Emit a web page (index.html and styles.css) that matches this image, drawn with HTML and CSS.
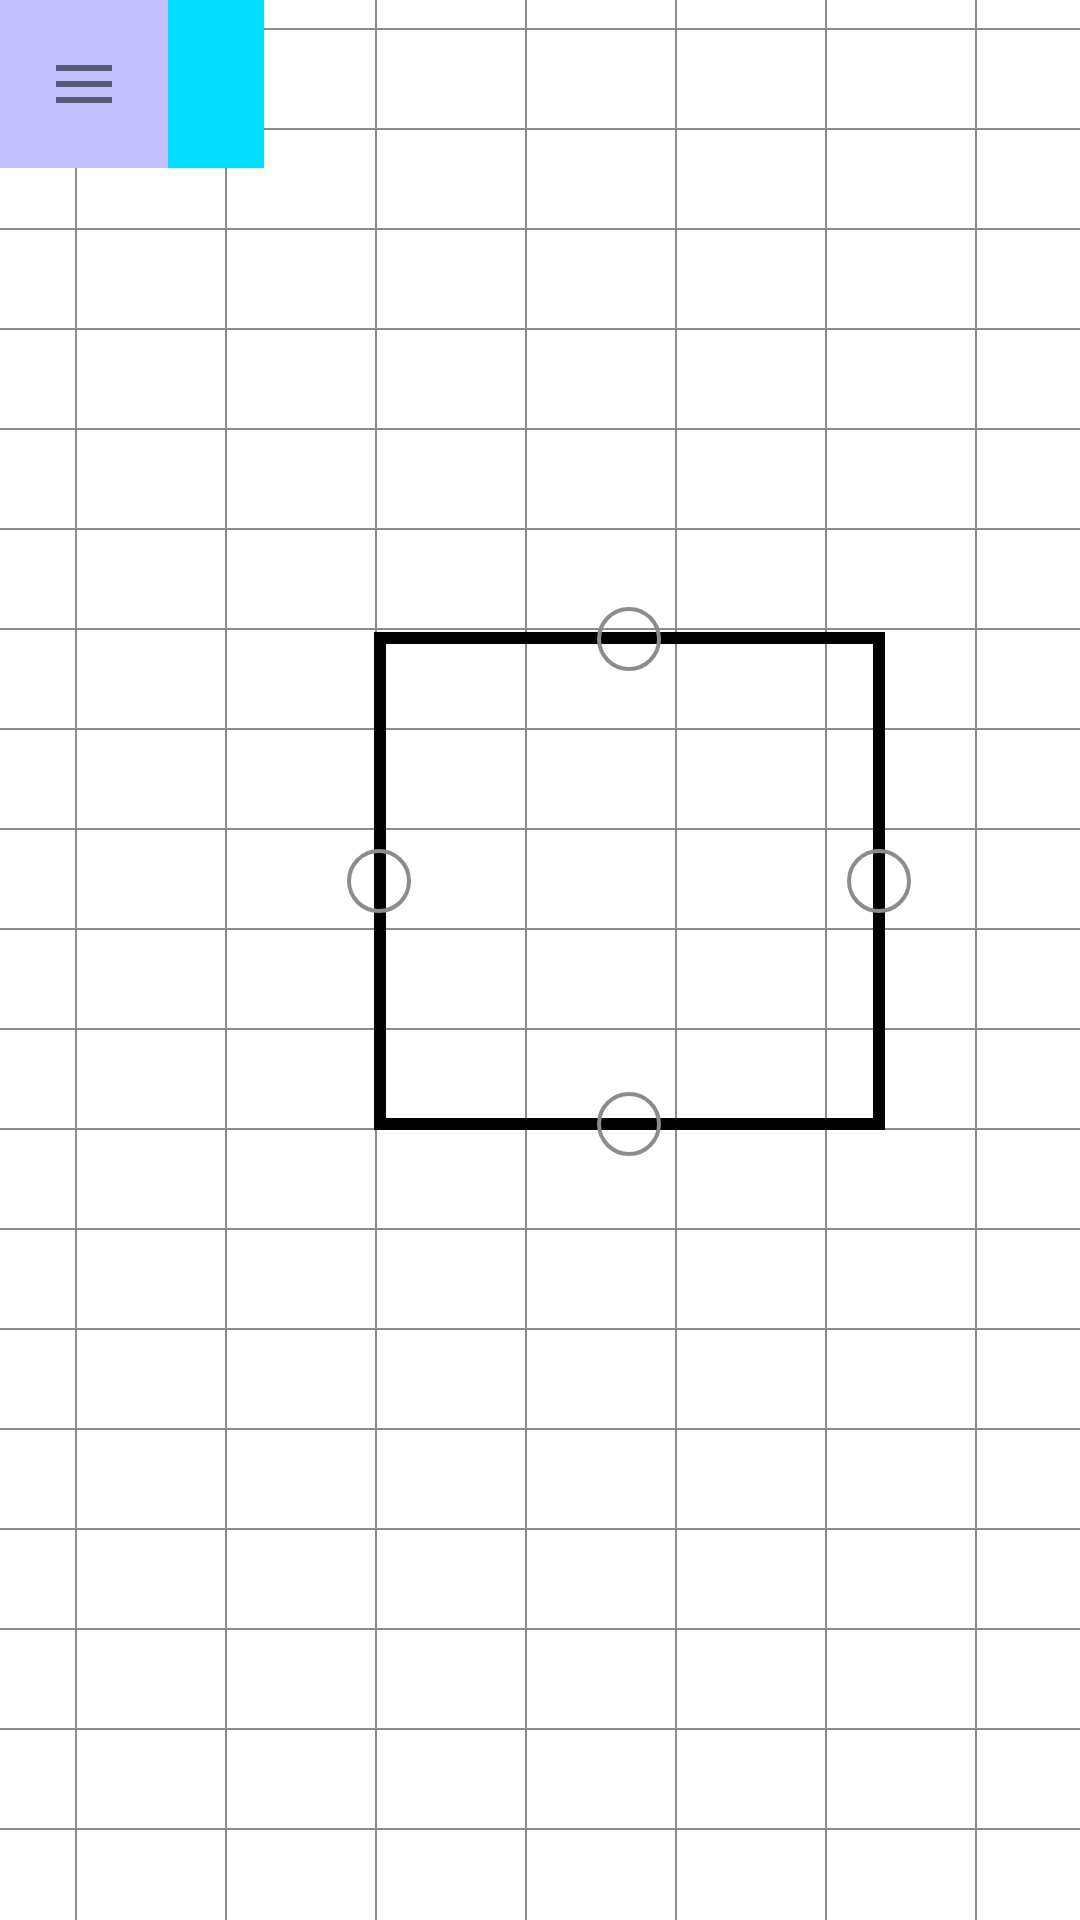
FILE: index.html
```html
<!DOCTYPE html>
<html lang="en">
<head>
  <meta charset="UTF-8">
  <meta name="viewport" content="width=device-width, initial-scale=1.0">
  <title>Sketch</title>
  <link rel="stylesheet" href="styles.css">
</head>
<body>
<div id="editor">
  <svg id="canvas" width="1080" height="1920" viewBox="0 0 1080 1920">
    <defs>
      <pattern id="grid" width="150" height="100" patternUnits="userSpaceOnUse">
        <line x1="76" y1="0" x2="76" y2="100" class="grid-line"/>
        <line x1="0" y1="29" x2="150" y2="29" class="grid-line"/>
      </pattern>
    </defs>
    <rect width="1080" height="1920" fill="url(#grid)"/>

    <!-- selected shape -->
    <rect class="shape" x="380" y="638" width="499" height="486"/>

    <!-- resize handles -->
    <circle class="handle" cx="629" cy="639" r="30"/>
    <circle class="handle" cx="379" cy="881" r="30"/>
    <circle class="handle" cx="879" cy="881" r="30"/>
    <circle class="handle" cx="629" cy="1124" r="30"/>
  </svg>

  <div id="toolbar">
    <div id="menu-button">
      <span class="bar"></span>
      <span class="bar"></span>
      <span class="bar"></span>
    </div>
    <div id="color-swatch"></div>
  </div>
</div>
</body>
</html>
```

FILE: styles.css
```css
body {
  margin: 0;
  background: #ffffff;
  font-family: "Liberation Sans", Arial, sans-serif;
}

#editor {
  position: relative;
  width: 1080px;
  height: 1920px;
  overflow: hidden;
}

#canvas {
  display: block;
}

.grid-line {
  stroke: #8c8c8c;
  stroke-width: 2;
}

.shape {
  fill: none;
  stroke: #000000;
  stroke-width: 12;
}

.handle {
  fill: none;
  stroke: #8c8c8c;
  stroke-width: 4;
}

#toolbar {
  position: absolute;
  top: 0;
  left: 0;
  display: flex;
}

#menu-button {
  width: 168px;
  height: 168px;
  background-color: #c2c0ff;
  display: flex;
  flex-direction: column;
  align-items: center;
  justify-content: center;
  gap: 10px;
  cursor: pointer;
}

#menu-button .bar {
  display: block;
  width: 56px;
  height: 6px;
  background-color: #5a5a78;
}

#color-swatch {
  width: 96px;
  height: 168px;
  background-color: #00ddff;
}
```
